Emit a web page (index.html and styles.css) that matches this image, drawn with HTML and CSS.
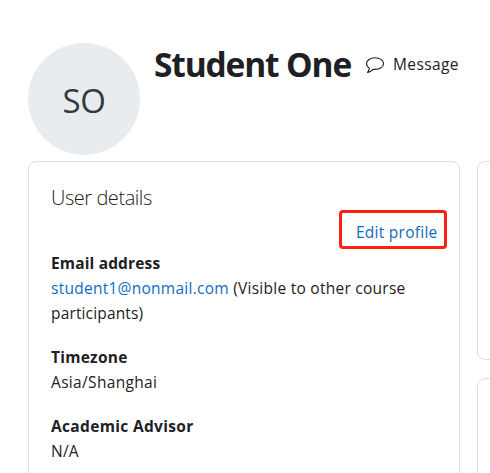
FILE: index.html
```html
<!DOCTYPE html>
<html lang="en">
<head>
<meta charset="utf-8">
<title>Student One</title>
<link rel="stylesheet" href="styles.css">
</head>
<body>
<div class="page">
  <header class="profile">
    <div class="avatar"><span class="initials">SO</span></div>
    <h1 class="name">Student One</h1>
    <a class="message">
      <svg class="bubble" viewBox="0 0 19 17" width="19" height="17"><path d="M10 .8C5.200.8 1.500 3.300 1.500 6.500c0 1.900 1.100 3.500 2.900 4.600-.2 1.700-.9 3.100-1.900 4.400 2.300-.4 4.200-1.600 5.500-3.200.7.100 1.300.1 2 .1 4.800 0 8.500-2.600 8.500-5.900S14.800.8 10 .8z"/></svg>
      <span class="message-label">Message</span>
    </a>
  </header>
  <main class="columns">
    <section class="card details">
      <h2 class="heading">User details</h2>
      <div class="actions"><a class="edit">Edit profile</a></div>
      <dl class="fields">
        <dt class="email-term">Email address</dt>
        <dd><a class="mail">student1@nonmail.com</a> (Visible to other course<br><span class="wrapped">participants)</span></dd>
        <dt>Timezone</dt>
        <dd class="zone">Asia/Shanghai</dd>
        <dt class="advisor-term">Academic Advisor</dt>
        <dd>N/A</dd>
      </dl>
    </section>
    <div class="side">
      <section class="card side-first"></section>
      <section class="card side-second"></section>
    </div>
  </main>
</div>
</body>
</html>
```
FILE: styles.css
```css
* { box-sizing: border-box; }
body {
  margin: 0;
  background: #fff;
  color: #1d2125;
  font-family: "Open Sans", "Noto Sans", sans-serif;
  font-size: 15.5px;
  line-height: 25px;
  letter-spacing: 0.26px;
  overflow: hidden;
}
.page { width: 490px; height: 473px; padding: 43px 0 0 28px; overflow: hidden; }
.profile { display: flex; height: 118px; white-space: nowrap; }
.avatar {
  display: flex;
  align-items: center;
  justify-content: center;
  flex: none;
  width: 112px;
  height: 112px;
  border-radius: 50%;
  background: #e9ecef;
  color: #343a40;
  font-size: 33px;
  line-height: 48px;
  letter-spacing: -0.3px;
  padding-top: 3px;
}
.name { margin: 0 0 0 14px; width: 211px; font-size: 33.5px; line-height: 42px; font-weight: 700; letter-spacing: -1.15px; }
.message { display: flex; height: 42px; align-items: center; letter-spacing: 0.4px; }
.bubble { margin: 2px 9px 0 0; fill: none; stroke: #1d2125; stroke-width: 1.1; stroke-linejoin: round; }
.columns { display: flex; gap: 17px; height: 400px; }
.card { border: 1px solid #dfdfdf; border-radius: 8px; background: #fff; }
.details { flex: none; width: 432px; padding: 22px 12px 0 22px; }
.heading { margin: 0; font-size: 20px; line-height: 28px; font-weight: 300; letter-spacing: -0.45px; }
.actions { display: flex; justify-content: flex-end; margin-top: -2px; }
.edit {
  width: 108px;
  height: 39px;
  padding: 7px 7px 0 14px;
  border: 3px solid #ff2015;
  border-radius: 4px;
  color: #0f6cbf;
  white-space: nowrap;
}
.fields { margin: 2px 0 0; white-space: nowrap; }
.fields dt { font-weight: 700; }
.fields .email-term { letter-spacing: 0.15px; }
.fields dd { margin: 0 0 19px; }
.fields .zone { margin-bottom: 18px; letter-spacing: 0.33px; }
.fields .advisor-term { line-height: 26px; letter-spacing: 0.33px; }
.mail { color: #0f6cbf; }
.wrapped { letter-spacing: 0.15px; }
.side { flex: none; width: 432px; }
.side-first { height: 199px; margin-bottom: 18px; }
.side-second { height: 200px; }
```
